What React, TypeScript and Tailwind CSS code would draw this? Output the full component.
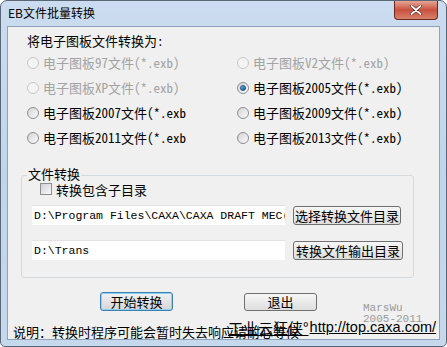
import React from 'react';

const cjk = '"Noto Sans Mono CJK SC", "Noto Sans CJK SC", monospace';

function Radio({ label, disabled, checked }: { label: string; disabled?: boolean; checked?: boolean }) {
    return (
        <div className="flex items-center gap-[4px] h-[25px]">
            <div
                className={
                    'w-[12px] h-[12px] rounded-full border flex items-center justify-center ' +
                    (disabled
                        ? 'border-[#c8c8c8] bg-[#f4f4f4]'
                        : 'border-[#8c8e90] bg-gradient-to-br from-[#d4d4d4] to-[#fbfbfb]')
                }
            >
                {checked && (
                    <div className="w-[6px] h-[6px] rounded-full bg-gradient-to-br from-[#7fc3ee] to-[#0d4d88] border border-[#16518c]" />
                )}
            </div>
            <span className={'text-[13px] leading-none ' + (disabled ? 'text-[#a3a3a3]' : 'text-black')}>{label}</span>
        </div>
    );
}

function Button({ children, className }: { children: React.ReactNode; className: string }) {
    return (
        <div
            className={
                'flex items-center justify-center rounded-[3px] border text-[13px] leading-none text-black ' + className
            }
        >
            {children}
        </div>
    );
}

export default function App() {
    return (
        <div
            className="w-[447px] h-[347px] relative flex flex-col overflow-hidden rounded-t-[7px] rounded-b-[5px] border border-[#5a6776] bg-gradient-to-b from-[#cbdcf0] via-[#c0d5ec] to-[#c6d8ec]"
            style={{ fontFamily: cjk }}
        >
            {/* title bar */}
            <div className="h-[28px] flex items-start justify-between pl-[7px] pr-[8px]">
                <span
                    className="mt-[6px] text-[12px] leading-none text-black"
                    style={{ fontFamily: '"Noto Sans CJK SC", sans-serif' }}
                >
                    EB文件批量转换
                </span>
                <div className="w-[44px] h-[19px] rounded-b-[4px] border border-t-0 border-[#6d2a22] bg-gradient-to-b from-[#e6a595] via-[#c9503f] to-[#d8806c] flex items-center justify-center">
                    <svg width="12" height="10" viewBox="0 0 12 10">
                        <path d="M1.5 1 L10.5 9 M10.5 1 L1.5 9" stroke="#3b1510" strokeWidth="3" strokeLinecap="round" />
                        <path d="M1.5 1 L10.5 9 M10.5 1 L1.5 9" stroke="#ffffff" strokeWidth="1.8" strokeLinecap="round" />
                    </svg>
                </div>
            </div>

            {/* client area */}
            <div className="mx-[6px] mb-[6px] flex-1 border border-[#8ea2b9] bg-[#f0f0f0] flex flex-col relative">
                <div className="mt-[3px] pl-[19px] h-[20px] flex items-center text-[13px] leading-none">
                    将电子图板文件转换为:
                </div>
                <div className="pl-[19px] grid grid-cols-[210px_1fr]">
                    <Radio label="电子图板97文件(*.exb)" disabled />
                    <Radio label="电子图板V2文件(*.exb)" disabled />
                    <Radio label="电子图板XP文件(*.exb)" disabled />
                    <Radio label="电子图板2005文件(*.exb)" checked />
                    <Radio label="电子图板2007文件(*.exb" />
                    <Radio label="电子图板2009文件(*.exb)" />
                    <Radio label="电子图板2011文件(*.exb" />
                    <Radio label="电子图板2013文件(*.exb)" />
                </div>

                {/* group box */}
                <div className="mt-[25px] ml-[13px] w-[393px] h-[103px] border border-[#d5dadf] rounded-[3px] relative flex flex-col">
                    <span className="absolute -top-[9px] left-[5px] px-[1px] bg-[#f0f0f0] text-[13px] leading-none">
                        文件转换
                    </span>
                    <div className="mt-[5px] ml-[18px] h-[16px] flex items-center gap-[4px]">
                        <div className="w-[12px] h-[12px] border border-[#8c8e90] bg-gradient-to-br from-[#d2d2d2] to-[#fafafa]" />
                        <span className="text-[13px] leading-none">转换包含子目录</span>
                    </div>
                    <div className="mt-[8px] ml-[10px] flex items-center gap-[8px]">
                        <div className="w-[253px] h-[20px] bg-white border-t border-[#e3e3e3] flex items-center pl-[2px] overflow-hidden whitespace-nowrap">
                            <span className="text-[11.5px] leading-none" style={{ fontFamily: '"Liberation Mono", monospace' }}>
                                D:\Program Files\CAXA\CAXA DRAFT MEC(
                            </span>
                        </div>
                        <Button className="w-[108px] h-[19px] border-[#707070] bg-gradient-to-b from-[#f6f6f6] to-[#dedede]">
                            选择转换文件目录
                        </Button>
                    </div>
                    <div className="mt-[15px] ml-[10px] flex items-center gap-[8px]">
                        <div className="w-[253px] h-[20px] bg-white border-t border-[#e3e3e3] flex items-center pl-[2px]">
                            <span className="text-[11.5px] leading-none" style={{ fontFamily: '"Liberation Mono", monospace' }}>
                                D:\Trans
                            </span>
                        </div>
                        <Button className="w-[110px] h-[19px] border-[#707070] bg-gradient-to-b from-[#f6f6f6] to-[#dedede]">
                            转换文件输出目录
                        </Button>
                    </div>
                </div>

                {/* buttons */}
                <div className="mt-[14px] ml-[92px] flex items-center gap-[71px]">
                    <Button className="w-[73px] h-[19px] border-[#3c7fb1] shadow-[inset_0_0_0_1px_#8fd0f5] bg-gradient-to-b from-[#f2f2f2] to-[#d6d6d6]">
                        开始转换
                    </Button>
                    <Button className="w-[73px] h-[18px] border-[#707070] bg-gradient-to-b from-[#f6f6f6] to-[#dedede]">
                        退出
                    </Button>
                </div>

                {/* footer */}
                <div className="mt-[12px] ml-[5px] h-[16px] flex items-center text-[13px] leading-none whitespace-nowrap">
                    说明：转换时程序可能会暂时失去响应请耐心等候
                </div>
                <div
                    className="absolute left-[355px] top-[276px] text-[11px] leading-[11px] text-[#9a9a9a]"
                    style={{ fontFamily: '"Liberation Mono", monospace' }}
                >
                    <div>MarsWu</div>
                    <div>2005-2011</div>
                </div>
                <div className="absolute left-[220px] top-[292px] h-[16px] flex items-center whitespace-nowrap">
                    <span className="text-[15px] leading-none underline" style={{ fontFamily: '"Noto Sans CJK SC", sans-serif' }}>
                        工业云狂侠°
                    </span>
                    <span
                        className="text-[14.5px] leading-none underline ml-[1px]"
                        style={{ fontFamily: '"Liberation Sans", sans-serif' }}
                    >
                        http://top.caxa.com/
                    </span>
                </div>
            </div>
        </div>
    );
}
